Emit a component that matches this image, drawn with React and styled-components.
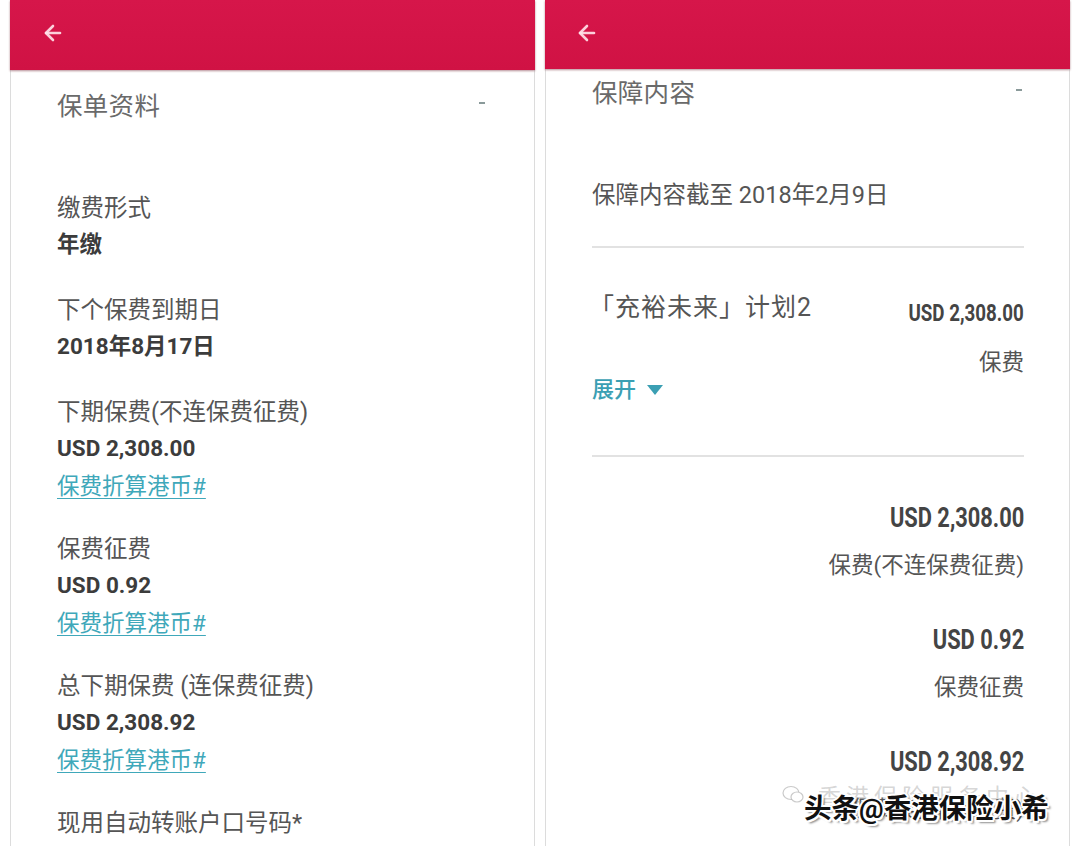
import React from "react";
import styled, { createGlobalStyle } from "styled-components";
import { ArrowLeft } from "lucide-react";

const Global = createGlobalStyle`
  html, body { margin: 0; padding: 0; background: #ffffff; }
  body { font-family: Roboto, "Noto Sans CJK SC", sans-serif; }
`;

const Page = styled.div`
  position: relative;
  display: flex;
  gap: 10px;
  padding-left: 10px;
  width: 1080px;
  height: 846px;
  box-sizing: border-box;
  overflow: hidden;
  background: #ffffff;
`;

const Panel = styled.div`
  width: 525px;
  height: 100%;
  box-sizing: border-box;
  border-left: 1px solid #dcdcdc;
  border-right: 1px solid #dcdcdc;
  display: flex;
  flex-direction: column;
  background: #fff;
`;

const Header = styled.div`
  height: ${(p) => p.$h}px;
  flex: none;
  margin: 0 -1px;
  background: linear-gradient(#d6164a, #d01244);
  box-shadow: 0 1px 2px rgba(90, 0, 20, 0.45);
  display: flex;
  align-items: center;
  padding-left: ${(p) => p.$pl}px;
  padding-bottom: 4px;
  box-sizing: border-box;
  color: rgba(255, 225, 232, 0.92);
`;

const Body = styled.div`
  padding: ${(p) => p.$pt}px 45px 0 46px;
  display: flex;
  flex-direction: column;
`;

const TitleRow = styled.div`
  display: flex;
  justify-content: space-between;
  align-items: center;
  height: 36px;
`;

const Title = styled.div`
  font-size: 25.5px;
  color: #6a6a6a;
  letter-spacing: 0.3px;
`;

const Dash = styled.span`
  width: 6px;
  height: 2px;
  background: #8a9a9a;
  margin-right: ${(p) => p.$mr}px;
`;

const Group = styled.div`
  display: flex;
  flex-direction: column;
  margin-top: ${(p) => p.$mt || 0}px;
  margin-bottom: 30px;
`;

const Label = styled.div`
  font-size: 23.5px;
  line-height: 34px;
  color: #555;
`;

const Value = styled.div`
  font-size: 22.5px;
  line-height: 38px;
  font-weight: 700;
  color: #3c3c3c;
`;

const Link = styled.a`
  margin-top: 3px;
  font-size: 22.5px;
  line-height: 32px;
  color: #3fa8ba;
  text-decoration: underline;
  text-underline-offset: 4px;
  text-decoration-thickness: 1px;
  align-self: flex-start;
`;

const Subtitle = styled.div`
  margin-top: 69px;
  font-size: 23.5px;
  line-height: 36px;
  color: #555;
`;

const Divider = styled.div`
  height: 2px;
  background: #e2e2e2;
  margin-top: ${(p) => p.$mt}px;
`;

const PlanRow = styled.div`
  display: flex;
  justify-content: space-between;
  padding-top: 42px;
`;

const PlanLeft = styled.div`
  display: flex;
  flex-direction: column;
  align-items: flex-start;
`;

const PlanName = styled.div`
  font-size: 25px;
  line-height: 36px;
  letter-spacing: 1px;
  color: #555;
  margin-left: -3px;
`;

const Toggle = styled.div`
  margin-top: 46px;
  display: flex;
  align-items: center;
  gap: 10px;
  font-size: 22px;
  line-height: 36px;
  font-weight: 500;
  color: #3b9fb3;
`;

const Triangle = styled.svg`
  width: 18px;
  height: 12px;
`;

const RightCol = styled.div`
  display: flex;
  flex-direction: column;
  align-items: flex-end;
`;

const Amount = styled.div`
  font-size: ${(p) => p.$size}px;
  line-height: ${(p) => p.$lh}px;
  margin-top: ${(p) => p.$mt || 0}px;
  font-weight: 700;
  color: #444;
  transform: scaleX(0.78);
  transform-origin: right center;
  white-space: nowrap;
`;

const AmountLabel = styled.div`
  font-size: 22.5px;
  line-height: 36px;
  margin-top: ${(p) => p.$mt}px;
  color: #555;
`;

const Summary = styled.div`
  display: flex;
  flex-direction: column;
  align-items: flex-end;
  padding-top: 41px;
`;

const SummaryItem = styled.div`
  display: flex;
  flex-direction: column;
  align-items: flex-end;
  margin-bottom: 37px;
`;

const Watermark = styled.div`
  position: absolute;
  left: 782px;
  top: 778px;
  width: 298px;
  height: 56px;
  pointer-events: none;
`;

const Ghost = styled.div`
  position: absolute;
  left: 0;
  top: 0;
  display: flex;
  align-items: center;
  gap: 14px;
  font-size: 23px;
  color: rgba(150, 150, 150, 0.4);
  letter-spacing: 5px;
  white-space: nowrap;
`;

const Mark = styled.div`
  position: absolute;
  left: 22px;
  top: 8px;
  font-size: 27.5px;
  font-weight: 700;
  color: #111;
  white-space: nowrap;
  text-shadow:
    -1.5px -1.5px 0 #fff, 1.5px -1.5px 0 #fff, -1.5px 1.5px 0 #fff, 1.5px 1.5px 0 #fff,
    0 -2px 0 #fff, 0 2px 0 #fff, -2px 0 0 #fff, 2px 0 0 #fff,
    3px 3px 2px rgba(0, 0, 0, 0.45);
`;

const leftGroups = [
  { label: "缴费形式", value: "年缴" },
  { label: "下个保费到期日", value: "2018年8月17日" },
  { label: "下期保费(不连保费征费)", value: "USD 2,308.00", link: true },
  { label: "保费征费", value: "USD 0.92", link: true },
  { label: "总下期保费 (连保费征费)", value: "USD 2,308.92", link: true },
  { label: "现用自动转账户口号码*", value: "" },
];

const summary = [
  { amount: "USD 2,308.00", label: "保费(不连保费征费)" },
  { amount: "USD 0.92", label: "保费征费" },
  { amount: "USD 2,308.92", label: "保费(连保费征费)" },
];

export default function App() {
  return (
    <>
      <Global />
      <Page>
        <Panel>
          <Header $h={70} $pl={31}>
            <ArrowLeft size={24} strokeWidth={2.6} />
          </Header>
          <Body $pt={15}>
            <TitleRow>
              <Title>保单资料</Title>
              <Dash $mr={4} />
            </TitleRow>
            {leftGroups.map((g, i) => (
              <Group key={i} $mt={i === 0 ? 70 : 0}>
                <Label>{g.label}</Label>
                {g.value && <Value>{g.value}</Value>}
                {g.link && <Link>保费折算港币#</Link>}
              </Group>
            ))}
          </Body>
        </Panel>
        <Panel>
          <Header $h={69} $pl={30}>
            <ArrowLeft size={24} strokeWidth={2.6} />
          </Header>
          <Body $pt={3}>
            <TitleRow>
              <Title>保障内容</Title>
              <Dash $mr={2} />
            </TitleRow>
            <Subtitle>保障内容截至 2018年2月9日</Subtitle>
            <Divider $mt={33} />
            <PlanRow>
              <PlanLeft>
                <PlanName>「充裕未来」计划2</PlanName>
                <Toggle>
                  展开
                  <Triangle viewBox="0 0 18 12">
                    <path d="M1 1 H17 L9 11 Z" fill="#3b9fb3" />
                  </Triangle>
                </Toggle>
              </PlanLeft>
              <RightCol>
                <Amount $size={24} $lh={36} $mt={5}>USD 2,308.00</Amount>
                <AmountLabel $mt={13}>保费</AmountLabel>
              </RightCol>
            </PlanRow>
            <Divider $mt={47} />
            <Summary>
              {summary.map((s, i) => (
                <SummaryItem key={i}>
                  <Amount $size={28} $lh={40}>{s.amount}</Amount>
                  <AmountLabel $mt={9}>{s.label}</AmountLabel>
                </SummaryItem>
              ))}
            </Summary>
          </Body>
        </Panel>
        <Watermark>
          <Ghost>
            <svg width="22" height="20" viewBox="0 0 22 20">
              <ellipse cx="9" cy="8" rx="8" ry="6.5" fill="none" stroke="rgba(150,150,150,0.5)" strokeWidth="1.2" />
              <ellipse cx="15" cy="12" rx="6" ry="5" fill="#fff" stroke="rgba(150,150,150,0.5)" strokeWidth="1.2" />
            </svg>
            香港保险服务中心
          </Ghost>
          <Mark>头条@香港保险小希</Mark>
        </Watermark>
      </Page>
    </>
  );
}
